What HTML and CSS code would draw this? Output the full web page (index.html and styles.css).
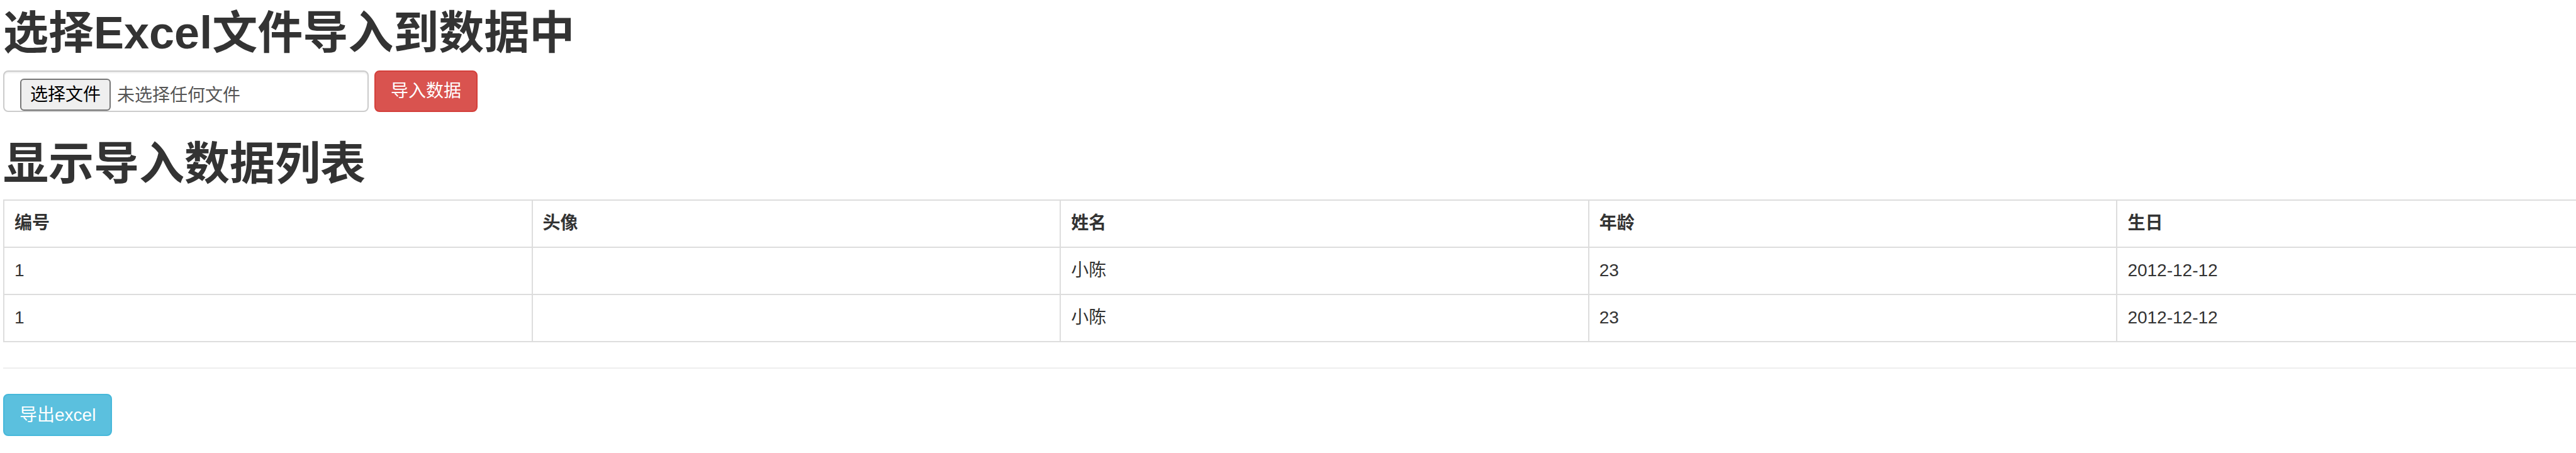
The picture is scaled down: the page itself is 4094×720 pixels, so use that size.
FILE: index.html
```html
<!DOCTYPE html>
<html lang="zh-CN">
<head>
<meta charset="utf-8">
<title>导入导出Excel</title>
<link rel="stylesheet" href="styles.css">
</head>
<body>
<div class="page">
  <h1 class="title">选择Excel文件导入到数据中</h1>
  <form class="upload">
    <div class="file-field">
      <span class="file-btn">选择文件</span>
      <span class="file-name">未选择任何文件</span>
    </div>
    <button type="button" class="btn btn-danger">导入数据</button>
  </form>
  <h1 class="title title-list">显示导入数据列表</h1>
  <table class="data-table">
    <thead>
      <tr><th>编号</th><th>头像</th><th>姓名</th><th>年龄</th><th>生日</th></tr>
    </thead>
    <tbody>
      <tr><td>1</td><td></td><td>小陈</td><td>23</td><td>2012-12-12</td></tr>
      <tr><td>1</td><td></td><td>小陈</td><td>23</td><td>2012-12-12</td></tr>
    </tbody>
  </table>
  <hr class="divider">
  <button type="button" class="btn btn-info">导出excel</button>
</div>
</body>
</html>
```

FILE: styles.css
```css
html, body {
  margin: 0;
  padding: 0;
  overflow: hidden;
  background: #fff;
}

body {
  font-family: "Liberation Sans", "Noto Sans CJK SC", sans-serif;
  font-size: 28px;
  line-height: 40px;
  color: #333;
}

.page {
  padding-left: 5px;
  width: 4200px;
}

.title {
  font-size: 72px;
  line-height: 80px;
  font-weight: 700;
  margin: 12px 0 20px;
  color: #333;
}

.title-list {
  margin: 42px 0 17px;
}

.upload {
  display: flex;
  align-items: stretch;
  gap: 9px;
  margin: 0;
}

.file-field {
  box-sizing: border-box;
  width: 581px;
  height: 66px;
  border: 2px solid #ccc;
  border-radius: 8px;
  box-shadow: inset 0 2px 2px rgba(0, 0, 0, 0.075);
  display: flex;
  align-items: center;
  padding: 9px 25px 0;
  gap: 10px;
}

.file-btn {
  box-sizing: border-box;
  height: 51px;
  padding: 0 14px;
  background: #efefef;
  border: 2px solid #767676;
  border-radius: 6px;
  color: #000;
  font-size: 28px;
  line-height: 47px;
  margin-top: 2px;
}

.file-name {
  color: #555;
  font-size: 28px;
  line-height: 47px;
  margin-top: 4px;
}

.btn {
  box-sizing: border-box;
  height: 66px;
  padding: 0 24px;
  border: 2px solid transparent;
  border-radius: 8px;
  font-family: inherit;
  font-size: 28px;
  line-height: 40px;
  color: #fff;
  cursor: pointer;
}

.btn-danger {
  background: #d9534f;
  border-color: #d43f3a;
}

.btn-info {
  background: #5bc0de;
  border-color: #46b8da;
  height: 67px;
}

.data-table {
  width: 4200px;
  table-layout: fixed;
  border-collapse: collapse;
  border-spacing: 0;
  border: 2px solid #ddd;
  margin-bottom: 40px;
}

.data-table th,
.data-table td {
  border: 2px solid #ddd;
  padding: 16px 16px 17px;
  line-height: 40px;
  text-align: left;
  vertical-align: top;
  height: 40px;
  color: #333;
}

.data-table th {
  font-weight: 700;
}

.divider {
  margin: 0 0 40px;
  border: 0;
  border-top: 2px solid #eee;
  height: 0;
}
```
